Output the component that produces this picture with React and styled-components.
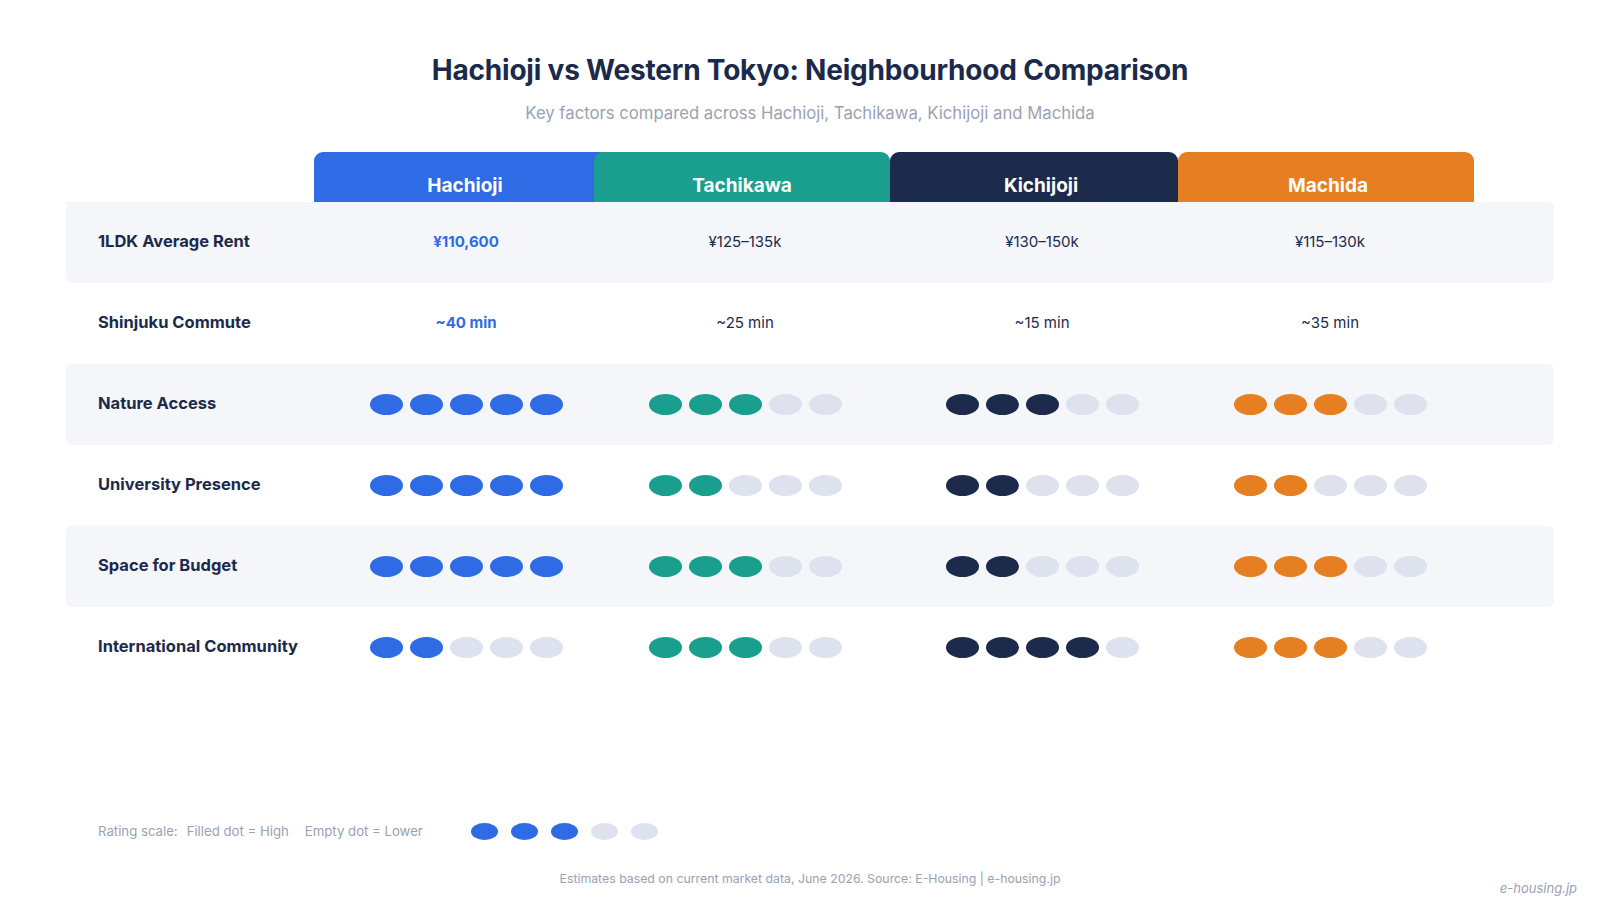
import React from 'react';
import styled, { createGlobalStyle } from 'styled-components';

const GlobalStyle = createGlobalStyle`
  html, body {
    margin: 0;
    padding: 0;
    background: #ffffff;
  }
  body {
    font-family: 'Inter', 'Open Sans', sans-serif;
    color: #1b2a4a;
  }
`;

const colors = {
  blue: '#2e6be4',
  teal: '#1a9e8e',
  navy: '#1c2b4b',
  orange: '#e67e22',
  empty: '#dde2ee',
  rowBg: '#f5f6fa',
  muted: '#9aa1b3',
};

const cities = [
  { name: 'Hachioji', color: colors.blue, inset: [0, 2], pad: 0 },
  { name: 'Tachikawa', color: colors.teal, inset: [-24, -18], pad: 0 },
  { name: 'Kichijoji', color: colors.navy, inset: [18, 34], pad: 14 },
  { name: 'Machida', color: colors.orange, inset: [-34, -26], pad: 4 },
];

const rows = [
  { label: '1LDK Average Rent', text: ['¥110,600', '¥125–135k', '¥130–150k', '¥115–130k'] },
  { label: 'Shinjuku Commute', text: ['~40 min', '~25 min', '~15 min', '~35 min'] },
  { label: 'Nature Access', dots: [5, 3, 3, 3] },
  { label: 'University Presence', dots: [5, 2, 2, 2] },
  { label: 'Space for Budget', dots: [5, 3, 2, 3] },
  { label: 'International Community', dots: [2, 3, 4, 3] },
];

const Page = styled.div`
  width: 1620px;
  height: 919px;
  display: flex;
  flex-direction: column;
  box-sizing: border-box;
  padding-top: 53px;
`;

const Title = styled.h1`
  margin: 0;
  text-align: center;
  font-size: 28px;
  line-height: 35px;
  font-weight: 700;
  color: #1b2a4a;
  letter-spacing: -0.2px;
`;

const Subtitle = styled.p`
  margin: 13px 0 0;
  text-align: center;
  font-size: 16.7px;
  line-height: 24px;
  font-weight: 400;
  color: ${colors.muted};
`;

const Table = styled.div`
  margin: 27px 66px 0;
  display: flex;
  flex-direction: column;
`;

const Grid = styled.div`
  display: grid;
  grid-template-columns: 248px 304px 254px 340px 236px 1fr;
  align-items: center;
`;

const HeaderRow = styled(Grid)`
  height: 50px;
  align-items: stretch;
`;

const Tab = styled.div`
  margin-left: ${p => p.$inset[0]}px;
  margin-right: ${p => p.$inset[1]}px;
  padding: 21px 0 0 ${p => p.$pad}px;
  background: ${p => p.$bg};
  border-radius: 9px 9px 0 0;
  color: #ffffff;
  font-size: 19px;
  line-height: 26px;
  font-weight: 700;
  text-align: center;
  box-sizing: border-box;
`;

const Row = styled(Grid)`
  height: 81px;
  background: ${p => (p.$shaded ? colors.rowBg : 'transparent')};
  border-radius: ${p => (p.$first ? '0 6px 6px 6px' : '6px')};
`;

const Label = styled.div`
  padding: 0 0 3px 32px;
  font-size: 16.5px;
  font-weight: 700;
  color: #1b2a4a;
`;

const Cell = styled.div`
  display: flex;
  justify-content: center;
  align-items: center;
  padding-bottom: ${p => (p.$text ? 3 : 0)}px;
  font-size: 15px;
  font-weight: ${p => (p.$highlight ? 700 : 400)};
  color: ${p => (p.$highlight ? colors.blue : '#1b2a4a')};
`;

const Dots = styled.div`
  display: flex;
  gap: ${p => (p.$small ? 13 : 7)}px;
`;

const Dot = styled.span`
  display: block;
  width: ${p => (p.$small ? 27 : 33)}px;
  height: ${p => (p.$small ? 17 : 21)}px;
  border-radius: 50%;
  background: ${p => (p.$on ? p.$color : colors.empty)};
`;

const Legend = styled.div`
  margin: 133px 0 0 98px;
  display: flex;
  align-items: center;
  font-size: 13.2px;
  line-height: 20px;
  color: ${colors.muted};
`;

const LegendText = styled.span`
  margin-right: ${p => p.$gap}px;
`;

const LegendDots = styled(Dots)`
  margin-left: 48px;
`;

const Footer = styled.div`
  margin-top: 29px;
  display: grid;
  grid-template-columns: 1fr auto 1fr;
`;

const Source = styled.div`
  grid-column: 2;
  font-size: 12.3px;
  line-height: 18px;
  color: ${colors.muted};
`;

const Watermark = styled.div`
  grid-column: 3;
  justify-self: end;
  margin-right: 43px;
  padding-top: 9px;
  font-size: 13px;
  line-height: 18px;
  font-style: italic;
  color: ${colors.muted};
`;

const Rating = ({ value, color, small }) => (
  <Dots $small={small}>
    {[0, 1, 2, 3, 4].map(i => (
      <Dot key={i} $small={small} $on={i < value} $color={color} />
    ))}
  </Dots>
);

export default function App() {
  return (
    <>
      <GlobalStyle />
      <Page>
        <Title>Hachioji vs Western Tokyo: Neighbourhood Comparison</Title>
        <Subtitle>Key factors compared across Hachioji, Tachikawa, Kichijoji and Machida</Subtitle>

        <Table>
          <HeaderRow>
            <div />
            {cities.map(c => (
              <Tab key={c.name} $bg={c.color} $inset={c.inset} $pad={c.pad}>
                {c.name}
              </Tab>
            ))}
          </HeaderRow>
          {rows.map((r, idx) => (
            <Row key={r.label} $shaded={idx % 2 === 0} $first={idx === 0}>
              <Label>{r.label}</Label>
              {cities.map((c, ci) => (
                <Cell key={c.name} $text={!!r.text} $highlight={r.text && ci === 0}>
                  {r.text ? r.text[ci] : <Rating value={r.dots[ci]} color={c.color} />}
                </Cell>
              ))}
            </Row>
          ))}
        </Table>

        <Legend>
          <LegendText $gap={9}>Rating scale:</LegendText>
          <LegendText $gap={16}>Filled dot = High</LegendText>
          <LegendText $gap={0}>Empty dot = Lower</LegendText>
          <LegendDots $small>
            {[0, 1, 2, 3, 4].map(i => (
              <Dot key={i} $small $on={i < 3} $color={colors.blue} />
            ))}
          </LegendDots>
        </Legend>

        <Footer>
          <Source>Estimates based on current market data, June 2026. Source: E-Housing | e-housing.jp</Source>
          <Watermark>e-housing.jp</Watermark>
        </Footer>
      </Page>
    </>
  );
}
